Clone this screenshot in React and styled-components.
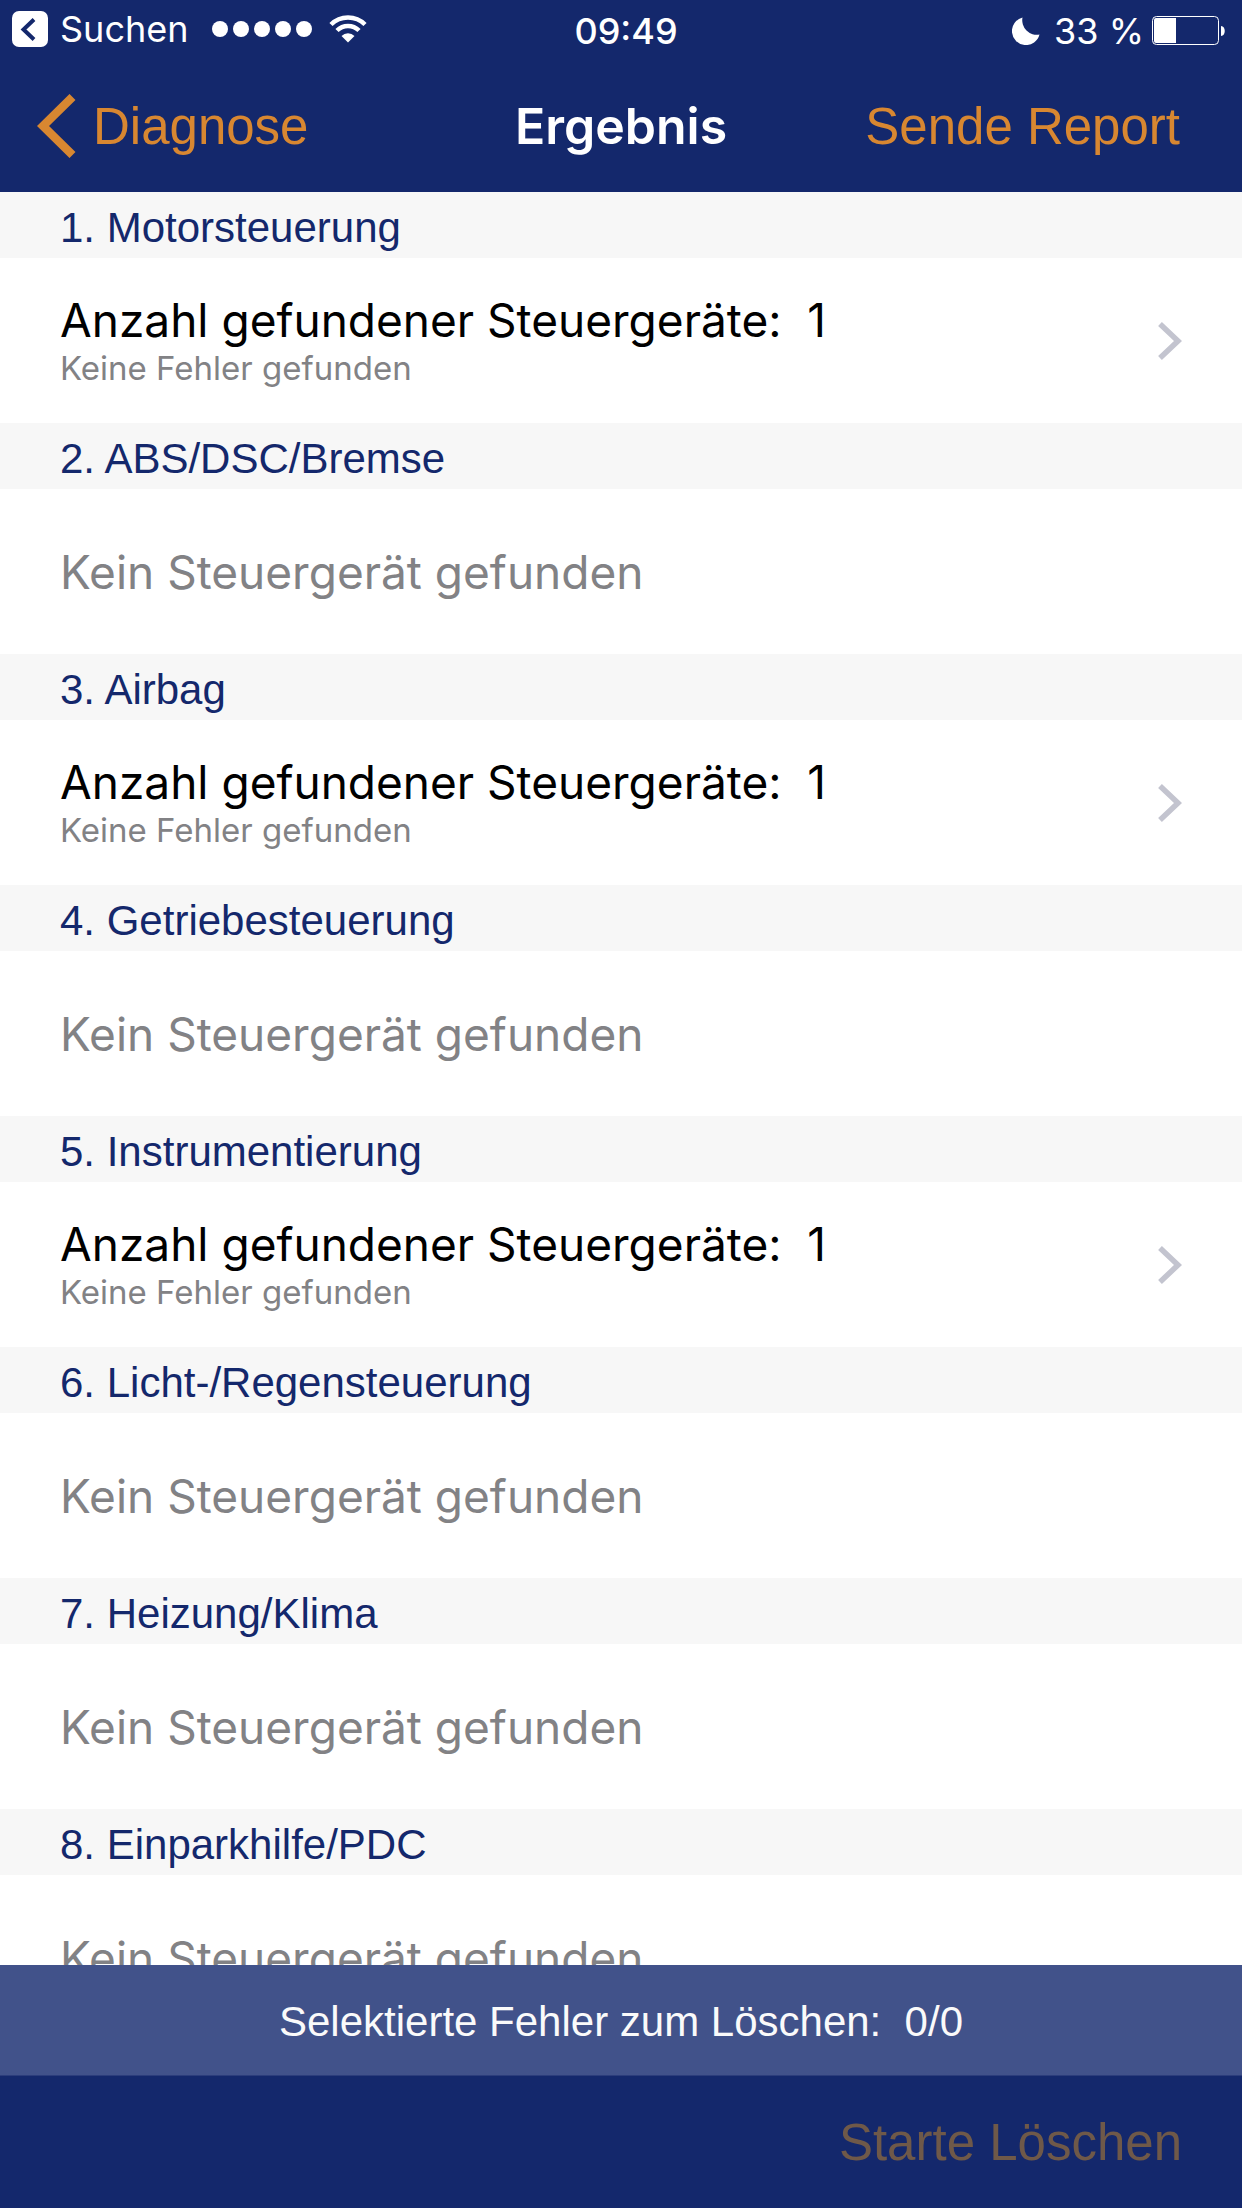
import React, { useState } from 'react';
import styled, { createGlobalStyle } from 'styled-components';

const units = [
  { name: 'Motorsteuerung', found: 1 },
  { name: 'ABS/DSC/Bremse', found: 0 },
  { name: 'Airbag', found: 1 },
  { name: 'Getriebesteuerung', found: 0 },
  { name: 'Instrumentierung', found: 1 },
  { name: 'Licht-/Regensteuerung', found: 0 },
  { name: 'Heizung/Klima', found: 0 },
  { name: 'Einparkhilfe/PDC', found: 0 },
];

const App = () => {
  const [sections] = useState(units);

  return (
    <Screen>
      <GlobalStyle />
      <Header>
        <StatusBar>
          <BackToApp type='button'>
            <BackBadge />
            Suchen
            <Signal>
              {[1, 2, 3, 4, 5].map(dot => (
                <Dot key={dot} />
              ))}
            </Signal>
            <Wifi />
          </BackToApp>
          <Time>09:49</Time>
          <Power>
            <Moon />
            33 %
            <Battery />
          </Power>
        </StatusBar>
        <NavBar>
          <NavButton type='button'>
            <BackArrow />
            Diagnose
          </NavButton>
          <Title>Ergebnis</Title>
          <NavButton type='button' $end>
            Sende Report
          </NavButton>
        </NavBar>
      </Header>
      <List>
        {sections.map((section, i) => (
          <section key={section.name}>
            <SectionTitle>
              {i + 1}. {section.name}
            </SectionTitle>
            {section.found ? (
              <ResultRow type='button'>
                <Result>
                  <Found>Anzahl gefundener Steuergeräte:&nbsp; {section.found}</Found>
                  <Detail>Keine Fehler gefunden</Detail>
                </Result>
                <Disclosure />
              </ResultRow>
            ) : (
              <EmptyRow>Kein Steuergerät gefunden</EmptyRow>
            )}
          </section>
        ))}
      </List>
      <Selection>Selektierte Fehler zum Löschen:&nbsp; 0/0</Selection>
      <Toolbar>
        <NavButton type='button' disabled>
          Starte Löschen
        </NavButton>
      </Toolbar>
    </Screen>
  );
};

const BackBadge = () => (
  <svg width='36' height='36' viewBox='0 0 36 36' aria-hidden='true'>
    <rect width='36' height='36' rx='7' fill='#fff' />
    <path d='M22 8.500L11.500 18.500L22 28.500' fill='none' stroke='#14286c' strokeWidth='4' />
  </svg>
);

const Wifi = () => (
  <svg width='38' height='28' viewBox='0 0 38 28' aria-hidden='true'>
    <g fill='none' stroke='#fff' strokeWidth='4.500'>
      <path d='M2 9.500a24 24 0 0 1 34 0' />
      <path d='M8 15.500a15.500 15.500 0 0 1 22 0' />
    </g>
    <path d='M19 27.500l-6.500-6.500a9.200 9.200 0 0 1 13 0z' fill='#fff' />
  </svg>
);

const Moon = () => (
  <svg width='28' height='28' viewBox='0 0 28 28' aria-hidden='true'>
    <path d='M10.500 0.500A14 14 0 1 0 27.500 17.500A14.500 14.500 0 0 1 10.500 0.500z' fill='#fff' />
  </svg>
);

const Battery = () => (
  <svg width='74' height='30' viewBox='0 0 74 30' aria-hidden='true'>
    <rect x='0.500' y='0.500' width='66' height='28' rx='4' fill='none' stroke='#fff' />
    <path d='M4 2h20v25h-20a2 2 0 0 1-2-2v-21a2 2 0 0 1 2-2z' fill='#fff' />
    <path d='M69 10c5 0 5 10 0 10z' fill='#fff' />
  </svg>
);

const BackArrow = () => (
  <svg width='39' height='64' viewBox='0 0 39 64' aria-hidden='true'>
    <path d='M35.500 3L6 32L35.500 61' fill='none' stroke='#d88731' strokeWidth='8.500' />
  </svg>
);

const Disclosure = () => (
  <svg width='25' height='38' viewBox='0 0 25 38' aria-hidden='true'>
    <path d='M3 2L21 19L3 36' fill='none' stroke='#c3c4cf' strokeWidth='5.500' />
  </svg>
);

const GlobalStyle = createGlobalStyle`
  * {
    margin: 0;
    padding: 0;
    box-sizing: border-box;
  }

  body {
    background: #fff;
    font-family: 'Inter', sans-serif;
  }

  button {
    border: none;
    background: none;
    font: inherit;
    color: inherit;
  }

  svg {
    flex-shrink: 0;
  }
`;

const Screen = styled.div`
  display: flex;
  flex-direction: column;
  height: 100vh;
`;

const Header = styled.header`
  background: #14286c;
  color: #fff;
`;

const StatusBar = styled.div`
  display: grid;
  grid-template-columns: 1fr auto 1fr;
  align-items: center;
  height: 60px;
  padding: 0 16px 0 12px;
  font-size: 36px;
`;

const BackToApp = styled.button`
  display: flex;
  align-items: center;
  gap: 12px;
  padding-bottom: 2px;
`;

const Signal = styled.span`
  display: flex;
  gap: 5px;
  padding: 0 5px 0 11px;
`;

const Dot = styled.span`
  width: 16px;
  height: 16px;
  border-radius: 50%;
  background: #fff;
`;

const Time = styled.time`
  padding: 2px 0 0 14px;
  font-weight: 500;
`;

const Power = styled.div`
  display: flex;
  justify-content: flex-end;
  align-items: center;
  gap: 8px;
  padding-top: 2px;

  svg:first-child {
    margin-right: 6px;
  }
`;

const NavBar = styled.nav`
  display: grid;
  grid-template-columns: 1fr auto 1fr;
  align-items: center;
  height: 132px;
  padding: 0 37px;
`;

const NavButton = styled.button`
  display: flex;
  align-items: center;
  justify-self: ${({ $end }) => ($end ? 'end' : 'start')};
  gap: 17px;
  padding-right: ${({ $end }) => ($end ? '25px' : 0)};
  font-family: 'Liberation Sans', sans-serif;
  font-size: 51px;
  color: #d88731;

  &:disabled {
    color: #6f5949;
  }
`;

const Title = styled.h1`
  font-size: 50px;
  font-weight: 600;
`;

const List = styled.main`
  flex: 1;
  min-height: 0;
  overflow-y: auto;
  scrollbar-width: none;
`;

const SectionTitle = styled.h2`
  height: 66px;
  padding: 6px 60px 0;
  background: #f7f7f7;
  color: #14286c;
  font-family: 'Liberation Sans', sans-serif;
  font-size: 42px;
  font-weight: 400;
  line-height: 60px;
`;

const ResultRow = styled.button`
  display: flex;
  justify-content: space-between;
  align-items: center;
  width: 100%;
  height: 165px;
  padding: 0 60px;
  text-align: left;
`;

const Result = styled.span`
  padding-bottom: 2px;
`;

const Found = styled.span`
  display: block;
  font-size: 46px;
  line-height: 56px;
  color: #000;
`;

const Detail = styled.span`
  display: block;
  font-size: 33px;
  line-height: 40px;
  color: #828285;
`;

const EmptyRow = styled.p`
  display: flex;
  align-items: center;
  height: 165px;
  padding: 0 60px;
  font-size: 46px;
  color: #828285;
`;

const Selection = styled.p`
  padding: 32px 30px 28px;
  background: #41528a;
  border-bottom: 1px solid #2c3d7b;
  color: #fafafa;
  font-family: 'Liberation Sans', sans-serif;
  font-size: 42px;
  line-height: 50px;
  text-align: center;
`;

const Toolbar = styled.footer`
  display: flex;
  justify-content: flex-end;
  height: 132px;
  padding: 0 60px;
  background: #14286c;
`;

export default App;
